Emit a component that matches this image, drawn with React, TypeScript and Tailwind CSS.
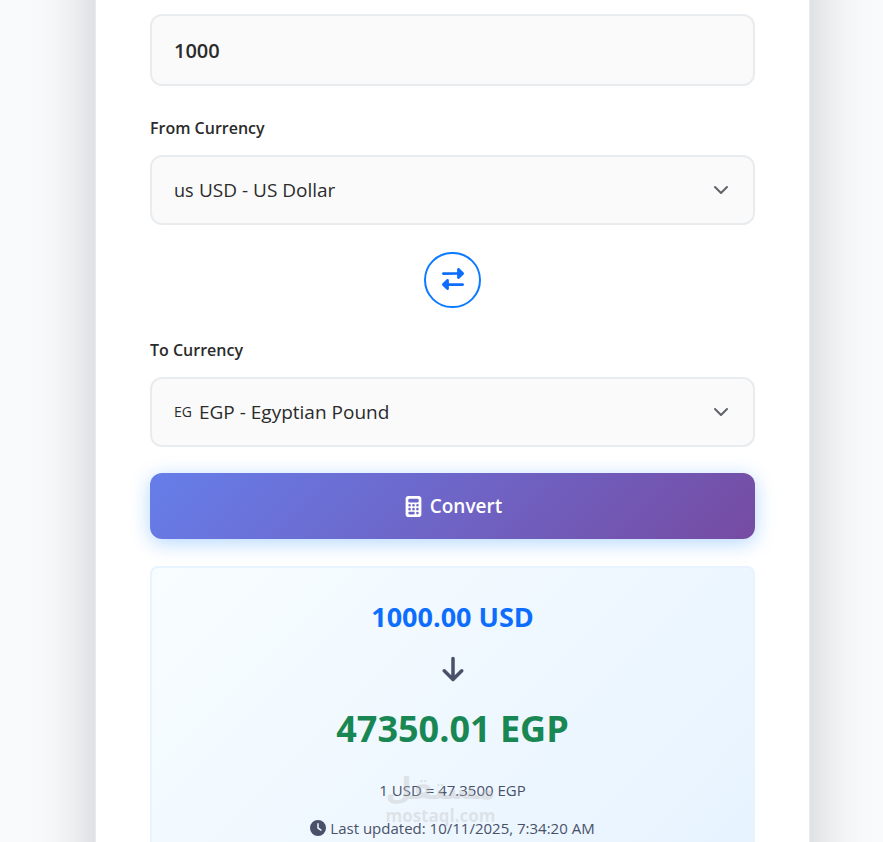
import { useState } from "react";
import { FaArrowDown, FaCalculator, FaClock, FaRightLeft } from "react-icons/fa6";

type Currency = { code: string; flag: string; flagClass: string; name: string };

const currencies: Currency[] = [
  { code: "USD", flag: "us", flagClass: "text-lg", name: "US Dollar" },
  { code: "EGP", flag: "EG", flagClass: "text-sm", name: "Egyptian Pound" },
];

function CurrencyField({
  id,
  label,
  value,
  onChange,
}: {
  id: string;
  label: string;
  value: string;
  onChange: (code: string) => void;
}) {
  const current = currencies.find((c) => c.code === value) ?? currencies[0];
  return (
    <div>
      <label htmlFor={id} className="mb-[15px] block text-base leading-6 font-semibold">
        {label}
      </label>
      <div className="relative flex h-[70px] items-center rounded-xl border-2 border-[#e9ecef] bg-[#fafafa] pl-[22px]">
        <span className={`w-[25px] shrink-0 leading-7 ${current.flagClass}`}>{current.flag}</span>
        <select
          id={id}
          value={value}
          onChange={(e) => onChange(e.target.value)}
          className="h-full min-w-0 flex-1 appearance-none bg-transparent text-[19px] outline-none"
        >
          {currencies.map((c) => (
            <option key={c.code} value={c.code}>
              {c.code} - {c.name}
            </option>
          ))}
        </select>
        <svg
          viewBox="0 0 16 16"
          className="pointer-events-none absolute right-6 size-4"
          fill="none"
          stroke="#5f6368"
          strokeWidth="2"
          strokeLinecap="round"
          strokeLinejoin="round"
        >
          <path d="m2 5 6 6 6-6" />
        </svg>
      </div>
    </div>
  );
}

export default function App() {
  const [amount, setAmount] = useState("1000");
  const [from, setFrom] = useState("USD");
  const [to, setTo] = useState("EGP");

  return (
    <div className="flex h-screen flex-col overflow-hidden bg-[#f8fafc] pr-[73px] pl-[95px] font-['Open_Sans','Noto_Sans',sans-serif] text-[#2b2b2b]">
      <main className="-my-24 flex flex-1 flex-col border-x border-[#e9ecef] bg-white px-[54px] pt-[110px] pb-24 shadow-[0_0_60px_rgba(0,0,0,0.2)]">
        <input
          type="text"
          aria-label="Amount"
          value={amount}
          onChange={(e) => setAmount(e.target.value)}
          className="mb-[30px] h-[72px] w-full shrink-0 rounded-xl border-2 border-[#e9ecef] bg-[#fafafa] px-[22px] text-xl font-semibold outline-none"
        />
        <CurrencyField id="from" label="From Currency" value={from} onChange={setFrom} />
        <button
          type="button"
          aria-label="Swap currencies"
          onClick={() => {
            setFrom(to);
            setTo(from);
          }}
          className="mx-auto mt-[27px] mb-[30px] flex h-14 w-[57px] shrink-0 items-center justify-center rounded-full border-2 border-[#0d7bff] pb-0.5 text-[#0d6efd]"
        >
          <FaRightLeft size={22} />
        </button>
        <CurrencyField id="to" label="To Currency" value={to} onChange={setTo} />
        <button
          type="button"
          className="mt-[26px] flex h-[66px] w-full shrink-0 items-center justify-center gap-1.5 rounded-xl bg-[linear-gradient(135deg,#667eea,#764ba2)] text-[19px] font-semibold text-white shadow-[0_4px_20px_rgba(0,123,255,0.3)]"
        >
          <FaCalculator size={21} />
          Convert
        </button>
        <section className="mt-[27px] flex flex-1 flex-col items-center rounded-t-lg border-2 border-b-0 border-[#e7f3ff] bg-[linear-gradient(135deg,#f8fdff,#e7f3ff)] pt-[31px]">
          <div className="text-[27px] leading-9 font-bold text-[#0d6efd]">1000.00 USD</div>
          <FaArrowDown size={28} className="mt-5 shrink-0 text-[#495168]" />
          <div className="mt-5 text-4xl leading-[52px] font-bold text-[#198754]">47350.01 EGP</div>
          <div className="relative mt-[23px] flex flex-col items-center text-[15px] leading-6 text-[#495168]">
            <div>1 USD = 47.3500 EGP</div>
            <div className="mt-[14px] flex items-center gap-1">
              <FaClock size={16} />
              Last updated: 10/11/2025, 7:34:20 AM
            </div>
            <div
              className="pointer-events-none absolute inset-x-0 -top-1 flex flex-col items-center pr-6 font-bold text-[#bcbcbc]/35"
              aria-hidden="true"
            >
              <span className="font-['DejaVu_Sans',sans-serif] text-3xl leading-[30px]" dir="rtl">
                مستقل
              </span>
              <span className="text-[17px] leading-6">mostaql.com</span>
            </div>
          </div>
        </section>
      </main>
    </div>
  );
}
